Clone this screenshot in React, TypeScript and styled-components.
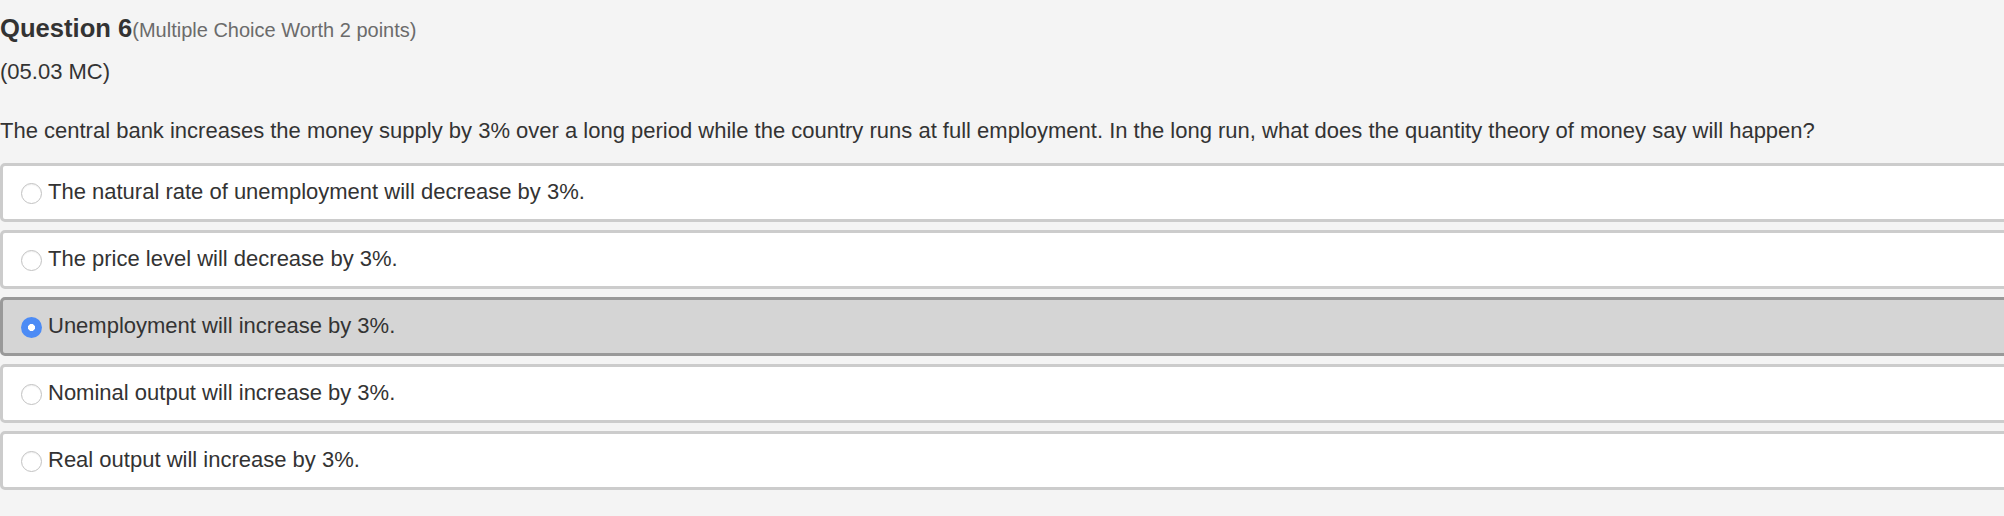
import styled, { createGlobalStyle } from "styled-components";

const GlobalStyle = createGlobalStyle`
  html, body {
    margin: 0;
    padding: 0;
    background: #f4f4f4;
    overflow: hidden;
  }
  body {
    font-family: "Liberation Sans", Arial, Helvetica, sans-serif;
    color: #333333;
  }
`;

const options = [
  "The natural rate of unemployment will decrease by 3%.",
  "The price level will decrease by 3%.",
  "Unemployment will increase by 3%.",
  "Nominal output will increase by 3%.",
  "Real output will increase by 3%.",
];

const selectedIndex = 2;

export default function App() {
  return (
    <Page>
      <GlobalStyle />
      <Title>
        Question 6<Worth>(Multiple Choice Worth 2 points)</Worth>
      </Title>
      <Code>(05.03 MC)</Code>
      <Prompt>
        The central bank increases the money supply by 3% over a long period
        while the country runs at full employment. In the long run, what does
        the quantity theory of money say will happen?
      </Prompt>
      <Choices>
        {options.map((text, i) => (
          <Choice key={text} $selected={i === selectedIndex}>
            <Radio $checked={i === selectedIndex} />
            <ChoiceText>{text}</ChoiceText>
          </Choice>
        ))}
      </Choices>
    </Page>
  );
}

const Page = styled.div`
  width: 2030px;
  padding-top: 13px;
`;

const Title = styled.div`
  font-size: 25.6px;
  font-weight: bold;
  line-height: 30px;
  color: #333333;
  white-space: nowrap;
`;

const Worth = styled.span`
  font-size: 20px;
  font-weight: normal;
  color: #6b6b6b;
`;

const Code = styled.div`
  margin-top: 12px;
  font-size: 22px;
  line-height: 30px;
`;

const Prompt = styled.div`
  margin-top: 29px;
  font-size: 22px;
  line-height: 30px;
  white-space: nowrap;
`;

const Choices = styled.div`
  margin-top: 16.5px;
  display: flex;
  flex-direction: column;
  gap: 8px;
`;

const Choice = styled.div<{ $selected: boolean }>`
  box-sizing: border-box;
  height: 59px;
  display: flex;
  align-items: center;
  padding-left: 18px;
  border: 3px solid ${(p) => (p.$selected ? "#999999" : "#cccccc")};
  border-radius: 5px;
  background: ${(p) => (p.$selected ? "#d5d5d5" : "#ffffff")};
`;

const Radio = styled.span<{ $checked: boolean }>`
  box-sizing: border-box;
  flex: none;
  width: 21px;
  height: 21px;
  margin-top: 3px;
  border-radius: 50%;
  border: ${(p) => (p.$checked ? "none" : "1.5px solid #c2c2c2")};
  box-shadow: ${(p) => (p.$checked ? "none" : "inset 0 1px 1px rgba(0, 0, 0, 0.06)")};
  background: ${(p) =>
    p.$checked
      ? "radial-gradient(circle, #ffffff 0 3.2px, #4c8bf5 3.8px)"
      : "#ffffff"};
`;

const ChoiceText = styled.span`
  margin-left: 6px;
  font-size: 22px;
  line-height: 30px;
  white-space: nowrap;
`;
